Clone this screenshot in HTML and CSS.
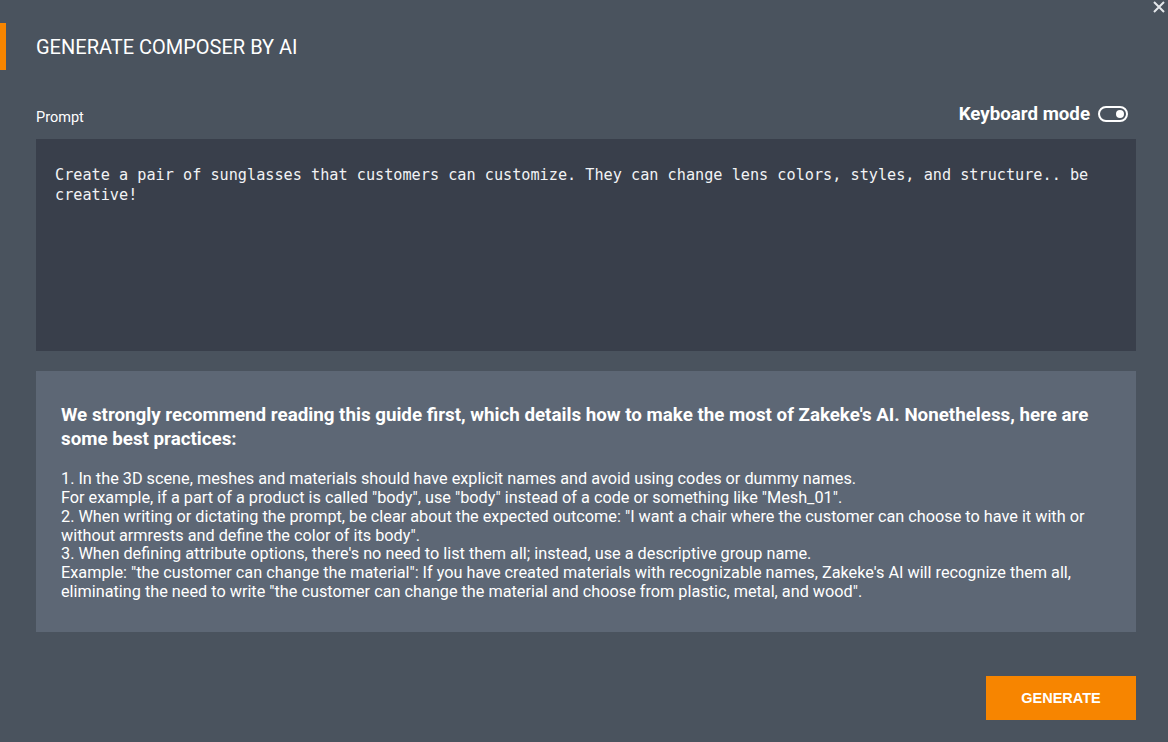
FILE: index.html
```html
<!DOCTYPE html>
<html lang="en">

<head>
  <meta charset="UTF-8">
  <meta name="viewport" content="width=device-width, initial-scale=1.0">
  <title>Generate composer by AI</title>

  <link rel="stylesheet" href="styles.css">
</head>

<body>
  <div class="modal">
    <button class="close-btn" aria-label="Close">
      <svg width="12" height="12" viewBox="0 0 12 12">
        <path d="M1 1 L11 11 M11 1 L1 11" stroke="#e4e7eb" stroke-width="2" fill="none" />
      </svg>
    </button>

    <div class="modal-header">
      <h1>GENERATE COMPOSER BY AI</h1>
    </div>

    <div class="modal-body">
      <div class="prompt-row">
        <label for="prompt">Prompt</label>
        <div class="keyboard-mode">
          <span>Keyboard mode</span>
          <span class="toggle"><span class="knob"></span></span>
        </div>
      </div>

      <div class="prompt-box" id="prompt">Create a pair of sunglasses that customers can customize. They can change lens colors, styles, and structure.. be creative!</div>

      <div class="guide">
        <h2>We strongly recommend reading this guide first, which details how to make the most of Zakeke's AI. Nonetheless, here are some best practices:</h2>
        <p>
          1. In the 3D scene, meshes and materials should have explicit names and avoid using codes or dummy names.<br>
          For example, if a part of a product is called "body", use "body" instead of a code or something like "Mesh_01".<br>
          2. When writing or dictating the prompt, be clear about the expected outcome: "I want a chair where the customer can choose to have it with or without armrests and define the color of its body".<br>
          3. When defining attribute options, there's no need to list them all; instead, use a descriptive group name.<br>
          Example: "the customer can change the material": If you have created materials with recognizable names, Zakeke's AI will recognize them all, eliminating the need to write "the customer can change the material and choose from plastic, metal, and wood".
        </p>
      </div>
    </div>

    <div class="modal-footer">
      <button class="generate-btn">GENERATE</button>
    </div>
  </div>
</body>

</html>
```

FILE: styles.css
```css
body {
  margin: 0;
  background-color: #4a535e;
  font-family: Roboto, "Liberation Sans", sans-serif;
  color: #ffffff;
}

.modal {
  position: relative;
  height: 742px;
  box-sizing: border-box;
  padding-top: 23px;
}

.close-btn {
  position: absolute;
  top: 1px;
  right: 3px;
  background: none;
  border: none;
  padding: 0;
  width: 12px;
  height: 12px;
  cursor: pointer;
}

.modal-header {
  height: 47px;
  border-left: 6px solid #f78500;
  display: flex;
  align-items: center;
  padding-left: 30px;
}

.modal-header h1 {
  margin: 0;
  font-size: 20px;
  font-weight: 400;
}

.modal-body {
  padding: 0 32px 0 36px;
}

.prompt-row {
  display: flex;
  justify-content: space-between;
  align-items: flex-end;
  margin-top: 32px;
  height: 23px;
  margin-bottom: 14px;
}

.prompt-row label {
  font-size: 14.5px;
  line-height: 16px;
  margin-bottom: -1px;
}

.keyboard-mode {
  display: flex;
  align-items: center;
  gap: 8px;
  font-size: 18.7px;
  font-weight: 700;
  margin-right: 8px;
}

.toggle {
  display: inline-flex;
  align-items: center;
  justify-content: flex-end;
  box-sizing: border-box;
  width: 30px;
  height: 16px;
  border: 2px solid #ffffff;
  border-radius: 8px;
  padding-right: 2px;
}

.knob {
  width: 8px;
  height: 8px;
  border-radius: 50%;
  background-color: #ffffff;
}

.prompt-box {
  background-color: #393f4b;
  height: 212px;
  box-sizing: border-box;
  padding: 26px 19px;
  font-family: "DejaVu Sans Mono", "Liberation Mono", monospace;
  font-size: 15.2px;
  line-height: 20px;
  color: #f2f3f5;
}

.guide {
  background-color: #5d6775;
  margin-top: 20px;
  height: 261px;
  box-sizing: border-box;
  padding: 32px 25px;
}

.guide h2 {
  margin: 0 0 19px;
  font-size: 18.75px;
  font-weight: 700;
  line-height: 24px;
}

.guide p {
  margin: 0;
  font-size: 16.25px;
  line-height: 18.85px;
}

.modal-footer {
  display: flex;
  justify-content: flex-end;
  padding: 44px 32px 0 0;
}

.generate-btn {
  width: 150px;
  height: 44px;
  background-color: #f78500;
  color: #ffffff;
  border: none;
  font-family: "Liberation Sans", Arial, sans-serif;
  font-size: 14.5px;
  font-weight: 700;
  cursor: pointer;
}
```
